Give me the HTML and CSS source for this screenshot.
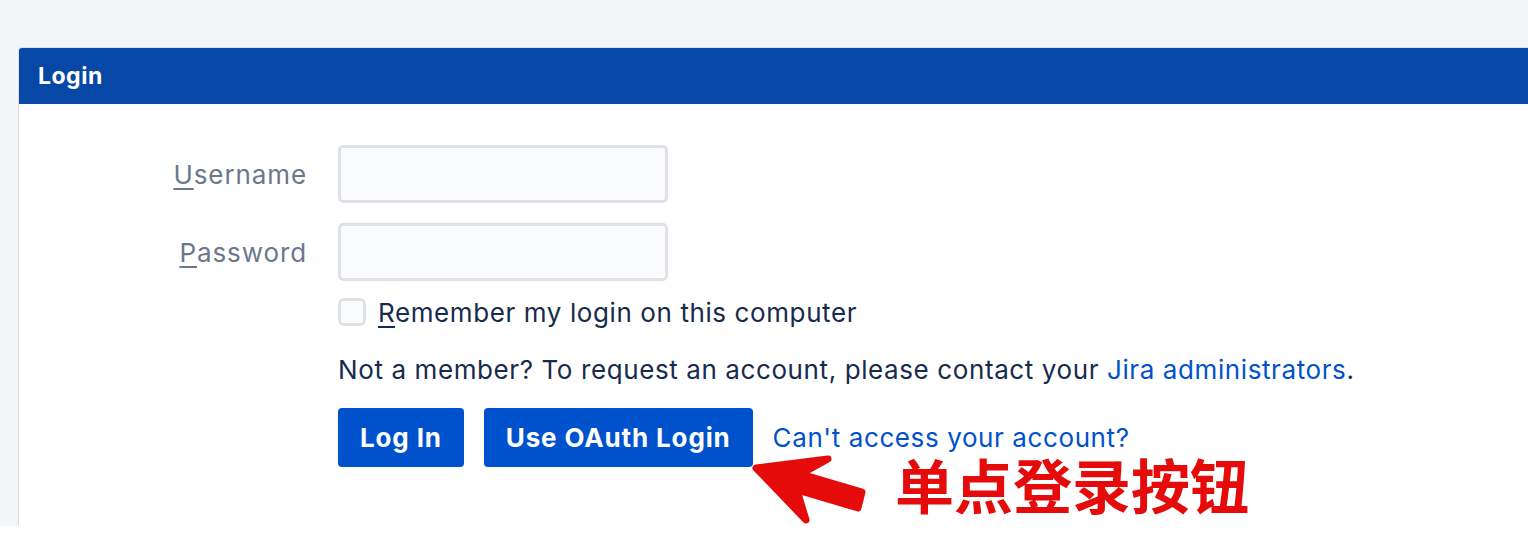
FILE: index.html
```html
<!DOCTYPE html>
<html lang="en">
<head>
    <meta charset="UTF-8">
    <title>Login</title>
    <link rel="stylesheet" href="styles.css">
</head>
<body>
    <div class="page">
        <div class="login-card">
            <div class="login-header">
                <h1>Login</h1>
            </div>

            <form class="login-form">
                <div class="form-row">
                    <label for="username" class="field-label"><u>U</u>sername</label>
                    <input type="text" id="username" class="form-control">
                </div>

                <div class="form-row">
                    <label for="password" class="field-label"><u>P</u>assword</label>
                    <input type="password" id="password" class="form-control">
                </div>

                <div class="form-row">
                    <span></span>
                    <div class="field-body">
                        <label class="remember">
                            <span class="checkbox"></span>
                            <span><u>R</u>emember my login on this computer</span>
                        </label>

                        <p class="member-note">Not a member? To request an account, please contact your <a href="#">Jira administrators</a>.</p>

                        <div class="actions">
                            <button type="button" class="btn">Log In</button>
                            <button type="button" class="btn">Use OAuth Login</button>
                            <a href="#" class="forgot-link">Can't access your account?</a>
                        </div>
                    </div>
                </div>
            </form>

            <!-- annotation over the screenshot -->
            <svg class="note-arrow" width="130" height="80" viewBox="0 0 130 80">
                <polygon points="6,18 78,9 51,24 112,42 108,58 47,40 56,70"
                    fill="#e60b0b" stroke="#e60b0b" stroke-width="7" stroke-linejoin="round"/>
            </svg>
            <div class="note-text">单点登录按钮</div>
        </div>
    </div>
</body>
</html>
```

FILE: styles.css
```css
html, body {
    margin: 0;
    background-color: #fff;
}

body {
    font-family: Inter, "Noto Sans", sans-serif;
    color: #172b4d;
}

.page {
    height: 526px;
    padding: 47px 0 0 18px;
    box-sizing: border-box;
    background-color: #f4f5f7;
    overflow: hidden;
}

.login-card {
    position: relative;
    height: 100%;
    background-color: #fff;
    border: 1px solid #dfe1e6;
    border-right: none;
    border-bottom: none;
    border-radius: 4px 0 0 0;
}

.login-header {
    height: 56px;
    display: flex;
    align-items: center;
    padding-left: 19px;
    background-color: #0747a6;
    border-radius: 3px 0 0 0;
}

.login-header h1 {
    margin: 0;
    font-size: 23px;
    font-weight: 700;
    letter-spacing: 0.5px;
    color: #fff;
}

.login-form {
    display: flex;
    flex-direction: column;
    gap: 20px;
    padding-top: 41px;
    font-size: 26px;
    letter-spacing: 0.6px;
}

.form-row {
    display: grid;
    grid-template-columns: 288px 1fr;
    column-gap: 31px;
    align-items: center;
}

.field-label {
    text-align: right;
    letter-spacing: 0.9px;
    color: #6b778c;
}

.field-label u,
.remember u {
    text-decoration-thickness: 2px;
    text-underline-offset: 4px;
}

.form-control {
    width: 330px;
    height: 58px;
    box-sizing: border-box;
    border: 3px solid #dfe1e6;
    border-radius: 5px;
    background-color: #fafbfc;
    font-size: 24px;
}

.field-body {
    display: flex;
    flex-direction: column;
    margin-top: -8px;
}

.remember {
    display: flex;
    align-items: center;
    gap: 12px;
    height: 38px;
}

.checkbox {
    width: 28px;
    height: 28px;
    box-sizing: border-box;
    border: 3px solid #dfe1e6;
    border-radius: 6px;
    background-color: #fafbfc;
}

.member-note {
    margin: 20px 0 0;
    line-height: 38px;
}

.member-note a,
.forgot-link {
    color: #0052cc;
    text-decoration: none;
}

.actions {
    display: flex;
    align-items: center;
    gap: 20px;
    margin-top: 19px;
}

.btn {
    height: 59px;
    padding: 0 22px;
    border: none;
    border-radius: 4px;
    background-color: #0052cc;
    color: #fff;
    font-family: inherit;
    font-size: 26px;
    font-weight: 700;
    letter-spacing: 0.85px;
}

.note-arrow {
    position: absolute;
    left: 731px;
    top: 402px;
}

.note-text {
    position: absolute;
    left: 876px;
    top: 409px;
    font-family: "Noto Sans CJK SC", sans-serif;
    font-size: 59px;
    font-weight: 700;
    line-height: 0.9;
    color: #e60b0b;
}
```
